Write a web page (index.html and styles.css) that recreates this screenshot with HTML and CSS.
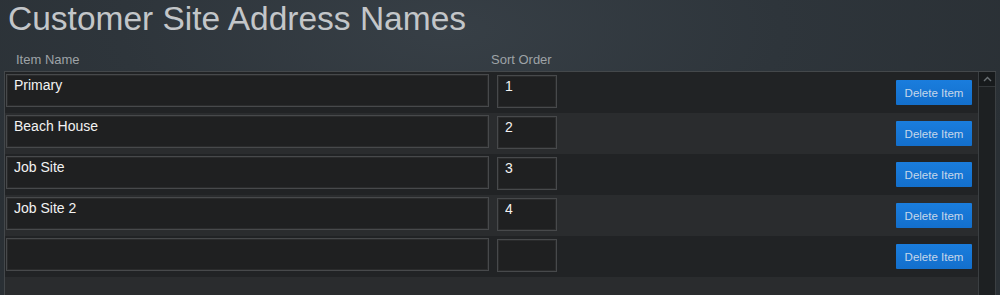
FILE: index.html
```html
<!DOCTYPE html>
<html lang="en">
<head>
    <meta charset="UTF-8">
    <meta name="viewport" content="width=device-width, initial-scale=1.0">
    <title>Customer Site Address Names</title>
    <link rel="stylesheet" href="styles.css">
</head>
<body>
    <h1 class="page-title">Customer Site Address Names</h1>

    <!-- Column headers -->
    <div class="list-header">
        <span class="col-name">Item Name</span>
        <span class="col-sort">Sort Order</span>
    </div>

    <!-- Editable item list -->
    <div class="list-box">
        <div class="list-rows">
            <div class="item-row">
                <input type="text" class="name-input" value="Primary">
                <input type="text" class="sort-input" value="1">
                <button class="delete-button">Delete Item</button>
            </div>
            <div class="item-row">
                <input type="text" class="name-input" value="Beach House">
                <input type="text" class="sort-input" value="2">
                <button class="delete-button">Delete Item</button>
            </div>
            <div class="item-row">
                <input type="text" class="name-input" value="Job Site">
                <input type="text" class="sort-input" value="3">
                <button class="delete-button">Delete Item</button>
            </div>
            <div class="item-row">
                <input type="text" class="name-input" value="Job Site 2">
                <input type="text" class="sort-input" value="4">
                <button class="delete-button">Delete Item</button>
            </div>
            <div class="item-row">
                <input type="text" class="name-input" value="">
                <input type="text" class="sort-input" value="">
                <button class="delete-button">Delete Item</button>
            </div>
        </div>
        <div class="scrollbar">
            <div class="scroll-up">
                <svg width="9" height="6" viewBox="0 0 9 6"><path d="M1 5 L4.5 1.5 L8 5" fill="none" stroke="#6a7074" stroke-width="1.4"/></svg>
            </div>
        </div>
    </div>
</body>
</html>
```

FILE: styles.css
```css
/* Base */
* {
    margin: 0;
    padding: 0;
    box-sizing: border-box;
    font-family: 'Liberation Sans', Arial, sans-serif;
}

html, body {
    height: 100%;
    overflow: hidden;
}

body {
    background: radial-gradient(ellipse 60% 90% at 45% 10%, #373f46 0%, #2e353b 55%, #2a3035 100%);
    color: #ddd;
}

/* Title */
.page-title {
    font-size: 33.5px;
    font-weight: normal;
    color: #c3c6c9;
    padding: 0 0 0 8px;
    height: 50px;
    line-height: 38px;
}

/* Column headers */
.list-header {
    display: flex;
    height: 21px;
    padding-top: 2px;
    font-size: 13px;
    color: #9ea3a7;
}

.col-name {
    width: 491px;
    padding-left: 16px;
}

/* List container */
.list-box {
    display: flex;
    margin: 0 4px 0 4px;
    height: 230px;
    border-left: 1px solid #44484b;
    border-top: 1px solid #44484b;
    background-color: #2a2c2e;
}

.list-rows {
    flex: 1;
}

.item-row {
    display: flex;
    align-items: flex-start;
    height: 41px;
    padding: 2px 6px 0 1px;
    background-color: #2a2c2e;
}

.item-row:nth-child(odd) {
    background-color: #212325;
}

/* Inputs */
input {
    height: 33px;
    background-color: #1f2021;
    border: 1px solid #47494b;
    box-shadow: inset 0 0 0 1px #2a2b2c;
    color: #f2f2f2;
    font-size: 14px;
    padding: 0 0 11px 7px;
    outline: none;
}

.name-input {
    width: 483px;
}

.sort-input {
    width: 60px;
    margin: 1px 0 0 8px;
}

/* Delete button */
.delete-button {
    margin: 6px 0 0 auto;
    width: 76px;
    height: 25px;
    border: none;
    border-radius: 1px;
    background: linear-gradient(#1a7ddd, #136fcc);
    color: #c6d7ea;
    font-size: 11.5px;
    cursor: pointer;
}

/* Scrollbar */
.scrollbar {
    width: 18px;
    background-color: #1d2022;
    border-left: 1px solid #3b3f42;
    border-right: 1px solid #3b3f42;
}

.scroll-up {
    height: 15px;
    display: flex;
    justify-content: center;
    align-items: center;
    background-color: #171a1c;
    border-bottom: 1px solid #33373a;
}
```
